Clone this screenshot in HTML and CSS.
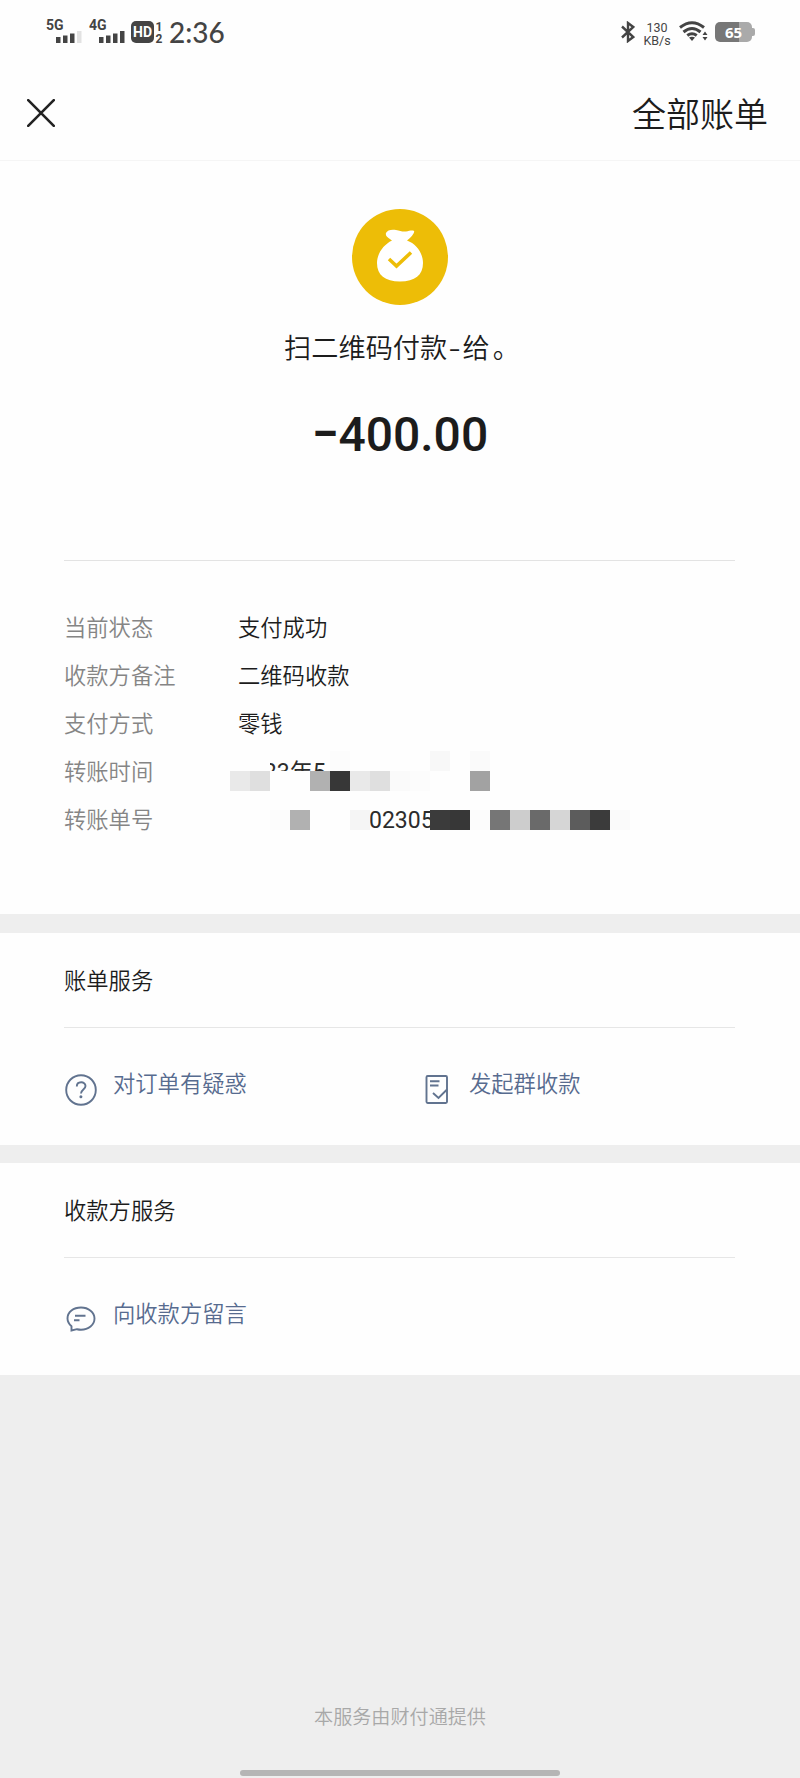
FILE: index.html
```
<!DOCTYPE html>
<html lang="zh-CN">
<head>
    <meta charset="UTF-8">
    <meta name="viewport" content="width=device-width, initial-scale=1.0">
    <title>全部账单</title>
    <link rel="stylesheet" href="styles.css">
</head>
<body>
    <div class="status-bar">
        <div class="signal">
            <span>5G</span>
            <svg width="26" height="12" viewBox="0 0 26 12"><path fill="#444" d="M0 6h4.500v6H0zM7 4.500h4.500V12H7zM14 2.500h4.500V12H14z"/><path fill="#e2e2e2" d="M21 0h4.500v12H21z"/></svg>
        </div>
        <div class="signal">
            <span>4G</span>
            <svg width="26" height="12" viewBox="0 0 26 12"><path fill="#444" d="M0 6h4.500v6H0zM7 4.500h4.500V12H7zM14 2.500h4.500V12H14zM21 0h4.500v12H21z"/></svg>
        </div>
        <div class="hd">HD</div>
        <div class="sim"><span>1</span><span>2</span></div>
        <div class="time">2:36</div>
        <svg class="bluetooth" width="14" height="22" viewBox="0 0 14 22"><path fill="none" stroke="#444" stroke-width="2.400" d="M1 5.500 12.300 16 7 20V2L12.300 6 1 16.500"/></svg>
        <div class="speed"><span>130</span><span>KB/s</span></div>
        <svg class="wifi" width="29" height="21" viewBox="0 0 29 21">
            <path fill="none" stroke="#444" stroke-width="3" d="M1 6.500Q13 -3 25 6.500M4.500 11Q13 4 21.500 11M8.300 14.500Q13 11 17.700 14.500"/>
            <path fill="#444" d="M10 16.500q3-1.500 6 0L13 20zM23.500 14l2.500-3.500 2.500 3.500zM23.500 16l2.500 3.500 2.500-3.500z"/>
        </svg>
        <div class="battery">65</div>
    </div>

    <div class="nav">
        <svg width="28" height="28" viewBox="0 0 28 28"><path stroke="#222" stroke-width="2.600" stroke-linecap="round" d="M1.200 1.200l25.600 25.600M26.800 1.200L1.200 26.800"/></svg>
        <a href="#">全部账单</a>
    </div>

    <div class="bill">
        <svg class="logo" width="96" height="96" viewBox="0 0 96 96">
            <circle cx="48" cy="48" r="48" fill="#edbd07"/>
            <path fill="#fff" d="M34 24c1-3 6-4 10-3 4 .500 6 2 10 1.500 3-.300 6-1.500 8-.500 1 1-2 6-7 9.500C65 35 71 45 71 54c0 12-8 18.500-23 18.500S25 66 25 54c0-9 6-18 15-22.500-3-2-7-4-6-7.500z"/>
            <path fill="none" stroke="#edbd07" stroke-width="3.500" d="M37 50l7.500 7L59 43.500"/>
        </svg>
        <div class="name">扫二维码付款<span class="dash">-</span>给<span class="stop">。</span></div>
        <div class="amount"><span>−</span>400.00</div>

        <div class="details">
            <div class="row"><span class="label">当前状态</span><span>支付成功</span></div>
            <div class="row"><span class="label">收款方备注</span><span>二维码收款</span></div>
            <div class="row"><span class="label">支付方式</span><span>零钱</span></div>
            <div class="row">
                <span class="label">转账时间</span>
                <div class="value">
                    <span class="date">2023年5</span>
                    <div class="mosaic mosaic-date">
                        <i class="w"></i><i class="w"></i><i></i><i></i><i></i><i class="c1"></i><i></i><i></i><i></i><i></i><i class="c3"></i><i></i><i class="c2"></i><i></i><i></i><i></i><i></i><i></i><i></i><i></i>
                        <i class="c5"></i><i class="c6"></i><i class="w"></i><i class="w"></i><i class="c8"></i><i class="c13"></i><i class="c5"></i><i class="c6"></i><i class="c2"></i><i class="c1"></i><i></i><i></i><i class="c9"></i>
                    </div>
                </div>
            </div>
            <div class="row">
                <span class="label">转账单号</span>
                <div class="value value-number">
                    <span class="number">02305</span>
                    <div class="mosaic mosaic-number">
                        <i></i><i></i><i class="c1"></i><i class="c8"></i><i></i><i></i><i class="c4"></i><i></i><i></i><i></i><i class="c12"></i><i class="c13"></i><i class="c1"></i><i class="c10"></i><i class="c7"></i><i class="c11"></i><i class="c6b"></i><i class="c11b"></i><i class="c12"></i><i class="c2"></i>
                    </div>
                </div>
            </div>
        </div>
    </div>

    <div class="service">
        <h3>账单服务</h3>
        <div class="links">
            <a href="#">
                <svg width="32" height="32" viewBox="0 0 32 32"><circle cx="16" cy="16" r="14.800"/><path d="M11.800 12.500c0-5.500 8.700-5.500 8.700-.500 0 3.500-4.500 3.500-4.500 7.500"/><circle class="dot" cx="15.900" cy="22.800" r="1.500"/></svg>
                对订单有疑惑
            </a>
            <a href="#">
                <svg width="32" height="32" viewBox="0 0 32 32"><rect x="5.500" y="2" width="20.500" height="27" rx="1.200"/><path d="M9 7.200h9.500M9 11.500h8.500M12 19l5.500 5 8.500-8.500"/></svg>
                发起群收款
            </a>
        </div>
    </div>

    <div class="service">
        <h3>收款方服务</h3>
        <div class="links">
            <a href="#">
                <svg width="32" height="32" viewBox="0 0 32 32"><path d="M6.500 26.500v-4.200C4 20 2.500 17.500 2.500 14.500 2.500 8 8.500 3.500 16 3.500s13.500 4.700 13.500 11S23.500 25.700 16 25.700c-1.500 0-2.700-.200-4-.500zM10 11.700h10.500M9 16.300h5.500"/></svg>
                向收款方留言
            </a>
        </div>
    </div>

    <div class="footer">
        <p>本服务由财付通提供</p>
        <div class="home-bar"></div>
    </div>
</body>
</html>
```
FILE: styles.css
```
* {
    box-sizing: border-box;
}
body {
    margin: 0;
    min-height: 1778px;
    display: flex;
    flex-direction: column;
    background-color: #eee;
    color: #1c1c1c;
    font-family: Roboto, 'Noto Sans CJK SC', sans-serif;
    font-size: 22.300px;
    font-weight: 350;
}
a {
    color: inherit;
    text-decoration: none;
}
.status-bar {
    display: flex;
    align-items: flex-start;
    height: 64px;
    padding: 21px 46px 0 46px;
    background-color: #fefefe;
    color: #444;
}
.signal {
    width: 43px;
    height: 22px;
    font: bold 14px/9px Roboto, sans-serif;
}
.signal span {
    display: block;
    height: 10px;
}
.signal svg {
    display: block;
    margin-left: 10px;
}
.hd {
    width: 23px;
    height: 22px;
    margin-left: -1px;
    border-radius: 5px;
    background-color: #444;
    color: #fff;
    font: bold 14px/22px Roboto, sans-serif;
    text-align: center;
}
.sim {
    display: flex;
    flex-direction: column;
    width: 10px;
    font: bold 12px/12px Roboto, sans-serif;
    text-align: center;
}
.time {
    width: 56px;
    margin-left: 5px;
    font: 500 28px/22px Lato, sans-serif;
    white-space: nowrap;
}
.bluetooth {
    margin-left: auto;
}
.speed {
    display: flex;
    flex-direction: column;
    width: 28px;
    margin-left: 8px;
    font: 12.500px/13px Roboto, sans-serif;
    text-align: center;
}
.wifi {
    margin-left: 8px;
}
.battery {
    position: relative;
    width: 37px;
    height: 20px;
    margin: 1px 2px 0 7px;
    border-radius: 5px;
    background: linear-gradient(90deg, #777 65%, #aaa 65%);
    color: #fff;
    font: bold 15px/21px 'Open Sans', sans-serif;
    text-align: center;
}
.battery::after {
    content: '';
    position: absolute;
    top: 6px;
    right: -3px;
    width: 3px;
    height: 8px;
    border-radius: 0 2px 2px 0;
    background-color: #aaa;
}
.nav {
    display: flex;
    justify-content: space-between;
    align-items: center;
    height: 97px;
    padding: 0 32px 0 27px;
    border-bottom: 1px solid #f5f5f5;
    background-color: #fefefe;
    font-size: 34px;
    font-weight: 350;
}
.nav svg {
    margin-top: 1px;
}
.bill {
    height: 753px;
    padding: 48px 64px 0;
    background-color: #fefefe;
}
.logo {
    display: block;
    margin: 0 auto;
}
.name {
    margin-top: 21px;
    padding-left: 4px;
    font-size: 27.200px;
    line-height: 40px;
    text-align: center;
}
.dash {
    display: inline-block;
    margin: 0 3px;
    font-family: 'Noto Sans CJK SC', sans-serif;
    transform: scaleX(1.3);
}
.stop {
    margin-left: 3px;
}
.amount {
    height: 60px;
    margin-top: 36px;
    font: 500 48px/60px Roboto, sans-serif;
    text-align: center;
}
.amount span {
    position: relative;
    top: -1px;
    font-weight: 700;
}
.details {
    margin: 95px 1px 0 0;
    padding-top: 41px;
    border-top: 1px solid #e3e3e3;
}
.row {
    display: flex;
    align-items: center;
    height: 48px;
}
.label {
    width: 174px;
    color: #858585;
}
.value {
    position: relative;
    color: #2c2c2c;
    font-size: 23px;
    font-weight: 400;
}
.value-number {
    padding-top: 5px;
}
.number {
    margin-left: 131px;
}
.mosaic {
    position: absolute;
    left: -8px;
    display: grid;
    grid-template-columns: repeat(20, 20px);
    grid-auto-rows: 20px;
}
.mosaic-date {
    top: -2px;
}
.mosaic-number {
    top: 8px;
}
.w { background-color: #fefefe; }
.c1 { background-color: #fcfcfc; }
.c2 { background-color: #fafafa; }
.c3 { background-color: #f8f8f8; }
.c4 { background-color: #f5f5f5; }
.c5 { background-color: #e9e9e9; }
.c6 { background-color: #dfdfdf; }
.c6b { background-color: #d6d6d6; }
.c7 { background-color: #cdcdcd; }
.c8 { background-color: #b1b1b1; }
.c9 { background-color: #a2a2a2; }
.c10 { background-color: #767676; }
.c11 { background-color: #6a6a6a; }
.c11b { background-color: #5c5c5c; }
.c12 { background-color: #3b3b3b; }
.c13 { background-color: #373737; }
.service {
    height: 212px;
    margin-bottom: 18px;
    padding: 0 65px 0 64px;
    background-color: #fefefe;
}
.bill + .service {
    margin-top: 19px;
}
.service h3 {
    height: 95px;
    margin: 0;
    border-bottom: 1px solid #e6e6e6;
    font-size: 22.300px;
    font-weight: 350;
    line-height: 97px;
}
.links {
    display: grid;
    grid-template-columns: 356px 1fr;
    padding: 40px 0 0 1px;
    color: #576b8f;
}
.links a {
    display: flex;
    gap: 16px;
    line-height: 32px;
}
.links svg {
    margin-top: 6px;
    fill: none;
    stroke: #61738f;
    stroke-width: 1.900;
}
.links .dot {
    fill: #61738f;
    stroke: none;
}
.footer {
    display: flex;
    flex-direction: column;
    align-items: center;
    margin-top: auto;
    color: #a8a8a8;
    font-size: 19.100px;
}
.footer p {
    margin: 0 0 37px;
    line-height: 30px;
}
.home-bar {
    width: 320px;
    height: 6px;
    margin-bottom: 2px;
    border-radius: 3px;
    background-color: #b5b5b5;
}
```
